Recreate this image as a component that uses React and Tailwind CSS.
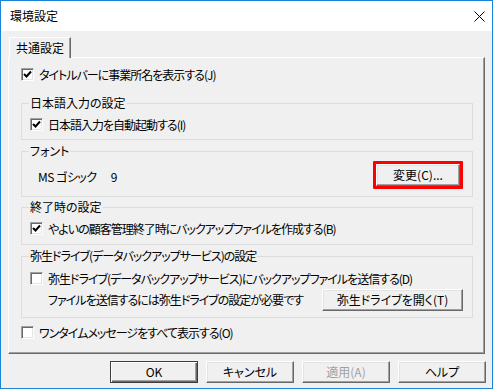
import React from 'react';

const font = "font-['Noto_Sans_CJK_JP','Liberation_Sans',sans-serif] [font-feature-settings:'palt']";

function CheckBox({ checked }) {
  return (
    <span className="w-[13px] h-[13px] shrink-0 bg-white border border-t-[#a0a0a0] border-l-[#a0a0a0] border-b-white border-r-white shadow-[inset_1px_1px_0_#696969,inset_-1px_-1px_0_#e3e3e3] flex items-center justify-center">
      {checked && (
        <svg width="9" height="9" viewBox="0 0 9 9">
          <path d="M1 4 L3.5 6.5 L8 1.5" fill="none" stroke="#000" strokeWidth="2" />
        </svg>
      )}
    </span>
  );
}

function CheckRow({ checked, children, className = '' }) {
  return (
    <div className={`flex items-center h-[15px] gap-[5px] text-[12px] leading-[15px] whitespace-nowrap ${className}`}>
      <CheckBox checked={checked} />
      <span className="tracking-[-1px]">{children}</span>
    </div>
  );
}

function Group({ title, tight, className = '', children }) {
  return (
    <fieldset className={`border border-[#dcdcdc] px-[8px] ${className}`}>
      <legend className={`px-[1px] ml-[-1px] text-[12px] leading-[14px] whitespace-nowrap ${tight ? 'tracking-[-1px]' : ''}`}>{title}</legend>
      {children}
    </fieldset>
  );
}

function Button({ children, isDefault, disabled, className = '' }) {
  return (
    <button
      className={`h-[22px] text-[12px] bg-[#f0f0f0] flex items-center justify-center whitespace-nowrap border ${
        isDefault
          ? 'border-[#3c3c3c] shadow-[inset_1px_1px_0_#fff,inset_-1px_-1px_0_#696969,inset_-2px_-2px_0_#a0a0a0]'
          : 'border-t-white border-l-white border-b-[#696969] border-r-[#696969] shadow-[inset_-1px_-1px_0_#a0a0a0,inset_1px_1px_0_#e3e3e3]'
      } ${disabled ? 'text-[#a0a0a0]' : 'text-black'} ${className}`}
    >
      {children}
    </button>
  );
}

export default function App() {
  return (
    <div className={`w-[493px] h-[389px] border border-[#1883d7] bg-[#f0f0f0] flex flex-col text-black ${font}`}>
      <div className="h-[30px] bg-white flex items-center justify-between pl-[9px] pr-[7px]">
        <span className="text-[12px] leading-[14px]">環境設定</span>
        <svg width="11" height="11" viewBox="0 0 11 11">
          <path d="M0.5 0.5 L10.5 10.5 M10.5 0.5 L0.5 10.5" stroke="#000" strokeWidth="1" />
        </svg>
      </div>

      <div className="pt-[6px] pl-[7px] pr-[6px] flex flex-col">
        <div className="flex">
          <div className="relative z-10 ml-[1px] h-[21px] -mb-[1px] bg-[#f0f0f0] border-t border-l border-t-white border-l-white border-r border-r-[#696969] shadow-[inset_-1px_0_0_#a0a0a0] px-[6px] pt-[2px] text-[12px] leading-[16px]">
            共通設定
          </div>
        </div>

        <div className="w-[477px] h-[297px] border border-t-white border-l-white border-r-[#696969] border-b-[#696969] shadow-[inset_-1px_-1px_0_#a0a0a0] pl-[12px] pr-[11px] pt-[9px]">
          <CheckRow checked>タイトルバーに事業所名を表示する(J)</CheckRow>

          <Group title="日本語入力の設定" className="mt-[14px] h-[44px] pt-[7px]">
            <CheckRow checked>日本語入力を自動起動する(I)</CheckRow>
          </Group>

          <Group title="フォント" className="mt-[4px] h-[53px] pt-[3px] pr-[9px]">
            <div className="flex justify-between">
              <div className="flex text-[12px] leading-[14px] mt-[9px] pl-[8px]">
                <span className="tracking-[-0.5px]">MS ゴシック</span>
                <span className="ml-[14px]">9</span>
              </div>
              <div className="border-[3px] border-[#ff0000] rounded-[1px]">
                <Button className="w-[84px] h-[17px]">変更(C)...</Button>
              </div>
            </div>
          </Group>

          <Group title="終了時の設定" className="mt-[3px] h-[45px] pt-[7px]">
            <CheckRow checked>やよいの顧客管理終了時にバックアップファイルを作成する(B)</CheckRow>
          </Group>

          <Group title="弥生ドライブ(データバックアップサービス)の設定" tight className="mt-[4px] h-[69px] pt-[8px] pr-[9px]">
            <CheckRow>弥生ドライブ(データバックアップサービス)にバックアップファイルを送信する(D)</CheckRow>
            <div className="flex items-center justify-between mt-[3px] pl-[18px]">
              <span className="text-[12px] leading-[14px] tracking-[-1px] whitespace-nowrap">ファイルを送信するには弥生ドライブの設定が必要です</span>
              <Button className="w-[141px] h-[21px]">弥生ドライブを開く(T)</Button>
            </div>
          </Group>

          <CheckRow className="mt-[7px]">ワンタイムメッセージをすべて表示する(O)</CheckRow>
        </div>

        <div className="flex justify-end gap-[8px] mt-[7px]">
          <Button isDefault className="w-[88px]">OK</Button>
          <Button className="w-[88px]">キャンセル</Button>
          <Button disabled className="w-[88px]">適用(A)</Button>
          <Button className="w-[88px]">ヘルプ</Button>
        </div>
      </div>
    </div>
  );
}
